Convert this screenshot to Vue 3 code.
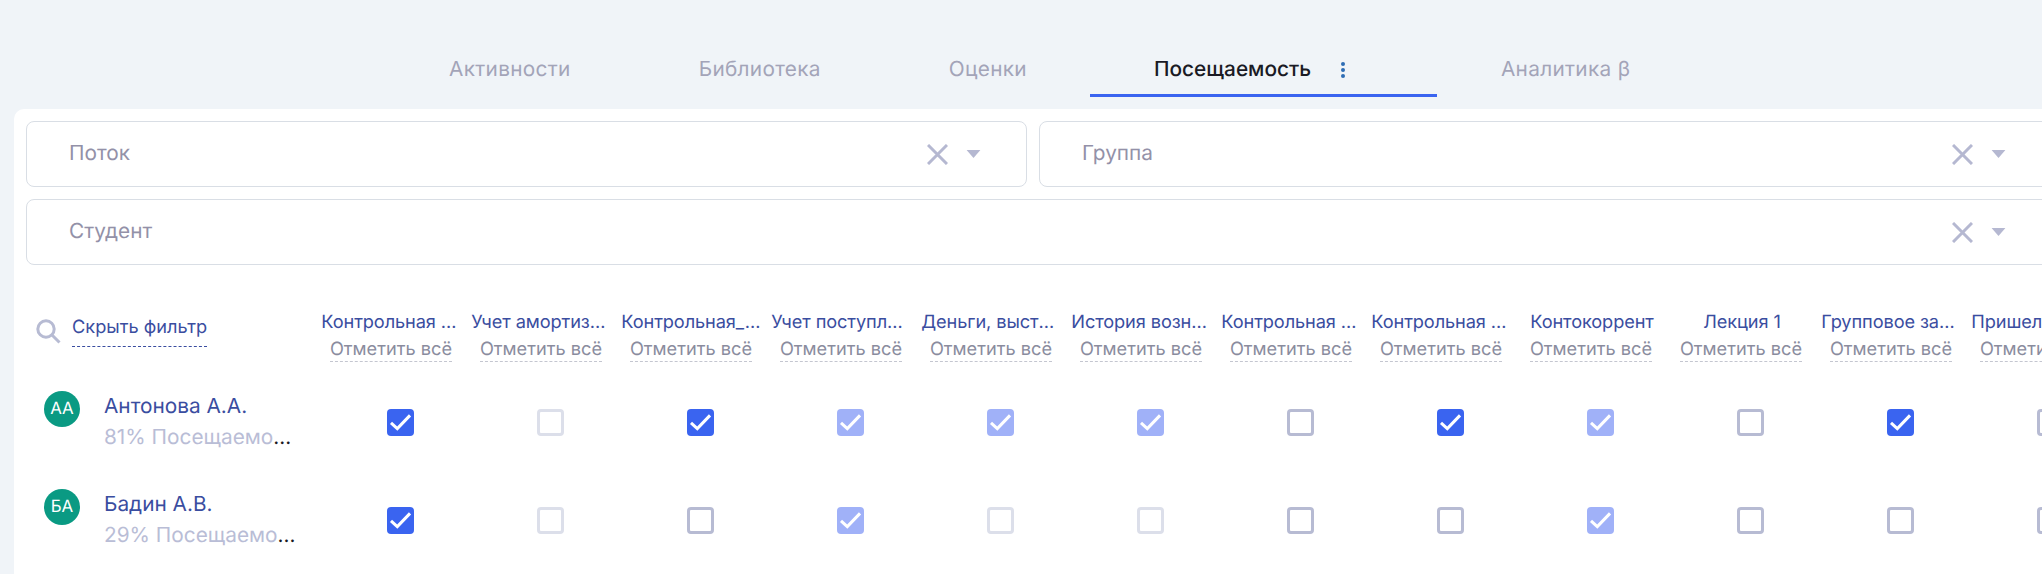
<script setup>
const tabs = [
  { label: 'Активности' },
  { label: 'Библиотека' },
  { label: 'Оценки' },
  { label: 'Посещаемость', active: true },
  { label: 'Аналитика β' }
]

const columns = [
  'Контрольная работа 1',
  'Учет амортизации основных средств',
  'Контрольная_работа_2',
  'Учет поступления материалов',
  'Деньги, выставленные счета',
  'История возникновения бухучета',
  'Контрольная работа 3',
  'Контрольная работа 4',
  'Контокоррент',
  'Лекция 1',
  'Групповое задание',
  'Пришел на занятие'
]

// on - отмечено, faded - отмечено автоматически, off - пусто, muted - недоступно
const students = [
  {
    initials: 'АА',
    name: 'Антонова А.А.',
    stat: '81% Посещаемости',
    marks: ['on', 'muted', 'on', 'faded', 'faded', 'faded', 'off', 'on', 'faded', 'off', 'on', 'off']
  },
  {
    initials: 'БА',
    name: 'Бадин А.В.',
    stat: '29% Посещаемости',
    marks: ['on', 'muted', 'off', 'faded', 'muted', 'muted', 'off', 'off', 'faded', 'off', 'off', 'off']
  }
]

const isChecked = (mark) => mark === 'on' || mark === 'faded'
</script>

<template>
  <div class="page">
    <nav class="tabs">
      <div
        v-for="tab in tabs"
        :key="tab.label"
        class="tab"
        :class="{ 'tab-active': tab.active }"
      >
        <span>{{ tab.label }}</span>
        <svg v-if="tab.active" class="tab-menu" width="4" height="16" viewBox="0 0 4 16">
          <circle cx="2" cy="2" r="2" />
          <circle cx="2" cy="8" r="2" />
          <circle cx="2" cy="14" r="2" />
        </svg>
      </div>
    </nav>

    <section class="panel">
      <div class="filters">
        <div class="filter filter-first">
          <span class="filter-label">Поток</span>
          <svg class="filter-clear" width="21" height="21" viewBox="0 0 21 21">
            <path d="M1 1L20 20M20 1L1 20" />
          </svg>
          <svg class="filter-arrow" width="15" height="8" viewBox="0 0 15 8">
            <path d="M0.6 0H14.4L7.5 8Z" />
          </svg>
        </div>
        <div class="filter filter-second">
          <span class="filter-label">Группа</span>
          <svg class="filter-clear" width="21" height="21" viewBox="0 0 21 21">
            <path d="M1 1L20 20M20 1L1 20" />
          </svg>
          <svg class="filter-arrow" width="15" height="8" viewBox="0 0 15 8">
            <path d="M0.6 0H14.4L7.5 8Z" />
          </svg>
        </div>
        <div class="filter filter-wide">
          <span class="filter-label">Студент</span>
          <svg class="filter-clear" width="21" height="21" viewBox="0 0 21 21">
            <path d="M1 1L20 20M20 1L1 20" />
          </svg>
          <svg class="filter-arrow" width="15" height="8" viewBox="0 0 15 8">
            <path d="M0.6 0H14.4L7.5 8Z" />
          </svg>
        </div>
      </div>

      <div class="table-head">
        <div class="head-left">
          <svg class="search-icon" width="25" height="25" viewBox="0 0 25 25">
            <circle cx="10" cy="10" r="8.2" />
            <path d="M16 16L23.5 23.5" />
          </svg>
          <span class="hide-filter">Скрыть фильтр</span>
        </div>
        <div v-for="column in columns" :key="column" class="head-col">
          <div class="head-title">{{ column }}</div>
          <span class="head-mark">Отметить всё</span>
        </div>
      </div>

      <div v-for="student in students" :key="student.name" class="row">
        <div class="student">
          <div class="avatar">{{ student.initials }}</div>
          <div class="student-info">
            <div class="student-name">{{ student.name }}</div>
            <div class="student-stat"><span>{{ student.stat }}</span></div>
          </div>
        </div>
        <div v-for="(mark, i) in student.marks" :key="i" class="cell">
          <div class="checkbox" :class="`checkbox-${mark}`">
            <svg v-if="isChecked(mark)" width="27" height="27" viewBox="0 0 27 27">
              <path d="M4 13.8L10.3 19.6L23 6.4" />
            </svg>
          </div>
        </div>
      </div>
    </section>
  </div>
</template>

<style>
html,
body {
  margin: 0;
  background: #f0f4f8;
}
</style>

<style scoped>
.page {
  width: 2042px;
  height: 574px;
  overflow: hidden;
  padding-top: 58px;
  box-sizing: border-box;
  background: #f0f4f8;
  font-family: Inter, "Noto Sans", sans-serif;
  text-rendering: geometricPrecision;
}

.tabs {
  display: flex;
  padding-left: 385px;
}

.tab {
  display: flex;
  align-items: center;
  padding: 0 64px 12px;
  border-bottom: 3px solid transparent;
  font-size: 20.8px;
  letter-spacing: 0.3px;
  line-height: 24px;
  color: #a3a4b8;
}

.tab-active {
  width: 347px;
  margin-left: -1px;
  box-sizing: border-box;
  padding-right: 0;
  color: #1a1a24;
  font-weight: 500;
  letter-spacing: 0;
  border-bottom-color: #3a64f0;
  position: relative;
}

.tab-menu {
  position: absolute;
  left: 251px;
  top: 4px;
  fill: #2f6db5;
}

.panel {
  width: 2100px;
  height: 465px;
  margin: 12px 0 0 14px;
  padding: 12px;
  box-sizing: border-box;
  background: #fff;
  border-radius: 10px 0 0 0;
}

.filters {
  display: grid;
  grid-template-columns: 1001px 1013px;
  gap: 12px;
}

.filter {
  display: flex;
  align-items: center;
  height: 66px;
  padding: 0 45px 0 42px;
  box-sizing: border-box;
  border: 1px solid #d9dee5;
  border-radius: 8px;
}

.filter-wide {
  grid-column: 1 / 3;
}

.filter-label {
  flex: 1;
  margin-top: -1px;
  font-size: 20.8px;
  line-height: 24px;
  color: #9391a8;
}

.filter-clear path {
  fill: none;
  stroke: #b5b8d1;
  stroke-width: 3;
}

.filter-arrow {
  margin-left: 18px;
  fill: #b5b8d1;
}

.table-head {
  display: flex;
  margin-top: 47px;
  height: 62px;
}

.head-left {
  flex: 0 0 290px;
  display: flex;
  align-items: flex-start;
  padding-left: 10px;
  box-sizing: border-box;
}

.search-icon {
  margin-top: 7px;
  flex-shrink: 0;
}

.search-icon circle,
.search-icon path {
  fill: none;
  stroke: #b7bbd3;
  stroke-width: 3;
}

.hide-filter {
  margin: 4px 0 0 11px;
  padding-bottom: 8px;
  height: 22px;
  font-size: 18.2px;
  line-height: 22px;
  color: #3a4da0;
  border-bottom: 1px dashed #3a4da0;
}

.head-col {
  flex: 0 0 150px;
  display: flex;
  flex-direction: column;
  align-items: center;
}

.head-title {
  width: 141.4px;
  margin-left: 2px;
  font-size: 18.2px;
  letter-spacing: -0.1px;
  line-height: 20px;
  color: #3a4da0;
  text-align: center;
  white-space: nowrap;
  overflow: hidden;
  text-overflow: ellipsis;
}

.head-mark {
  margin-top: 7px;
  padding-bottom: 2px;
  font-size: 18.2px;
  line-height: 20px;
  color: #8a8c9e;
  border-bottom: 1px dashed #c4c6d0;
}

.row {
  display: flex;
  height: 98px;
}

.student {
  flex: 0 0 299px;
  display: flex;
  align-items: flex-start;
  padding: 17px 0 0 18px;
  box-sizing: border-box;
}

.avatar {
  flex-shrink: 0;
  width: 36px;
  height: 36px;
  border-radius: 50%;
  background: #0a9a83;
  color: #fff;
  display: flex;
  align-items: center;
  justify-content: center;
  font-size: 16.9px;
}

.student-info {
  margin: 4px 0 0 24px;
  min-width: 0;
}

.student-name {
  font-size: 20.8px;
  line-height: 24px;
  color: #3a4da0;
}

.student-stat {
  width: 194px;
  margin-top: 7px;
  font-size: 20.8px;
  line-height: 24px;
  color: #1a1a24;
  white-space: nowrap;
  overflow: hidden;
  text-overflow: ellipsis;
}

.student-stat span {
  color: #b9bdd6;
}

.cell {
  flex: 0 0 150px;
  display: flex;
  justify-content: center;
  padding-top: 35px;
  box-sizing: border-box;
}

.checkbox {
  width: 27px;
  height: 27px;
  border-radius: 4px;
  box-sizing: border-box;
}

.checkbox svg {
  display: block;
}

.checkbox path {
  fill: none;
  stroke: #fff;
  stroke-width: 3;
}

.checkbox-on {
  background: #3a64f0;
}

.checkbox-faded {
  background: #a0b1f8;
}

.checkbox-off {
  border: 3px solid #b7bbd3;
}

.checkbox-muted {
  border: 3px solid #dcdfea;
}
</style>
